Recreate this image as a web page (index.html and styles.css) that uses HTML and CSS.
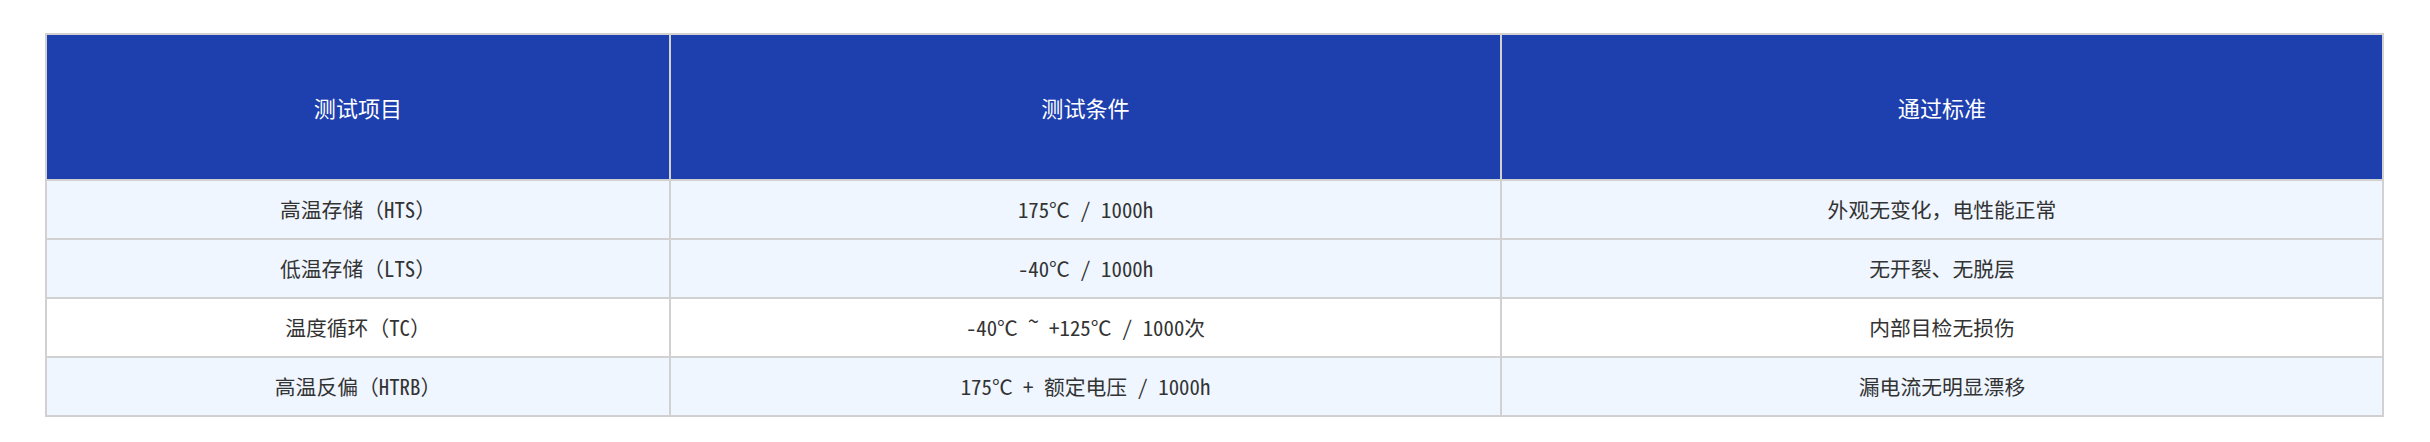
FILE: index.html
```html
<!DOCTYPE html>
<html lang="zh-CN">
<head>
<meta charset="utf-8">
<title>可靠性测试</title>
<link rel="stylesheet" href="styles.css">
</head>
<body>
<table class="spec-table">
  <colgroup>
    <col class="col-item">
    <col class="col-cond">
    <col class="col-pass">
  </colgroup>
  <thead>
    <tr>
      <th>测试项目</th>
      <th>测试条件</th>
      <th>通过标准</th>
    </tr>
  </thead>
  <tbody>
    <tr class="row-tint">
      <td>高温存储（HTS）</td>
      <td>175℃ / 1000h</td>
      <td>外观无变化，电性能正常</td>
    </tr>
    <tr class="row-tint">
      <td>低温存储（LTS）</td>
      <td>-40℃ / 1000h</td>
      <td>无开裂、无脱层</td>
    </tr>
    <tr class="row-plain">
      <td>温度循环（TC）</td>
      <td>-40℃ <span class="tilde">~</span> +125℃ / 1000次</td>
      <td>内部目检无损伤</td>
    </tr>
    <tr class="row-tint">
      <td>高温反偏（HTRB）</td>
      <td>175℃ + 额定电压 / 1000h</td>
      <td>漏电流无明显漂移</td>
    </tr>
  </tbody>
</table>
</body>
</html>
```

FILE: styles.css
```css
html, body {
  background: #ffffff;
}

body {
  margin: 33px 46px 0 45px;
  font-family: "Noto Sans Mono CJK SC", "Noto Sans CJK SC", monospace;
  color: #333333;
}

.spec-table {
  width: 2339px;
  table-layout: fixed;
  border-collapse: separate;
  border-spacing: 0;
  border-top: 2px solid #d1d1d1;
  border-left: 2px solid #d1d1d1;
}

.col-item { width: 624px; }
.col-cond { width: 831px; }
.col-pass { width: 882px; }

.spec-table th,
.spec-table td {
  border-right: 2px solid #d1d1d1;
  border-bottom: 2px solid #d1d1d1;
  text-align: center;
  vertical-align: middle;
}

.spec-table th {
  background: #1e40af;
  color: #ffffff;
  font-size: 22.1px;
  font-weight: 400;
  line-height: 30px;
  padding: 57px 10px;
}

.spec-table td {
  font-size: 20.8px;
  line-height: 29px;
  padding: 14px 10px;
}

.tilde {
  line-height: 0;
  vertical-align: 0.33em;
}

.row-tint td {
  background: #eff6ff;
}

.row-plain td {
  background: #ffffff;
}
```
